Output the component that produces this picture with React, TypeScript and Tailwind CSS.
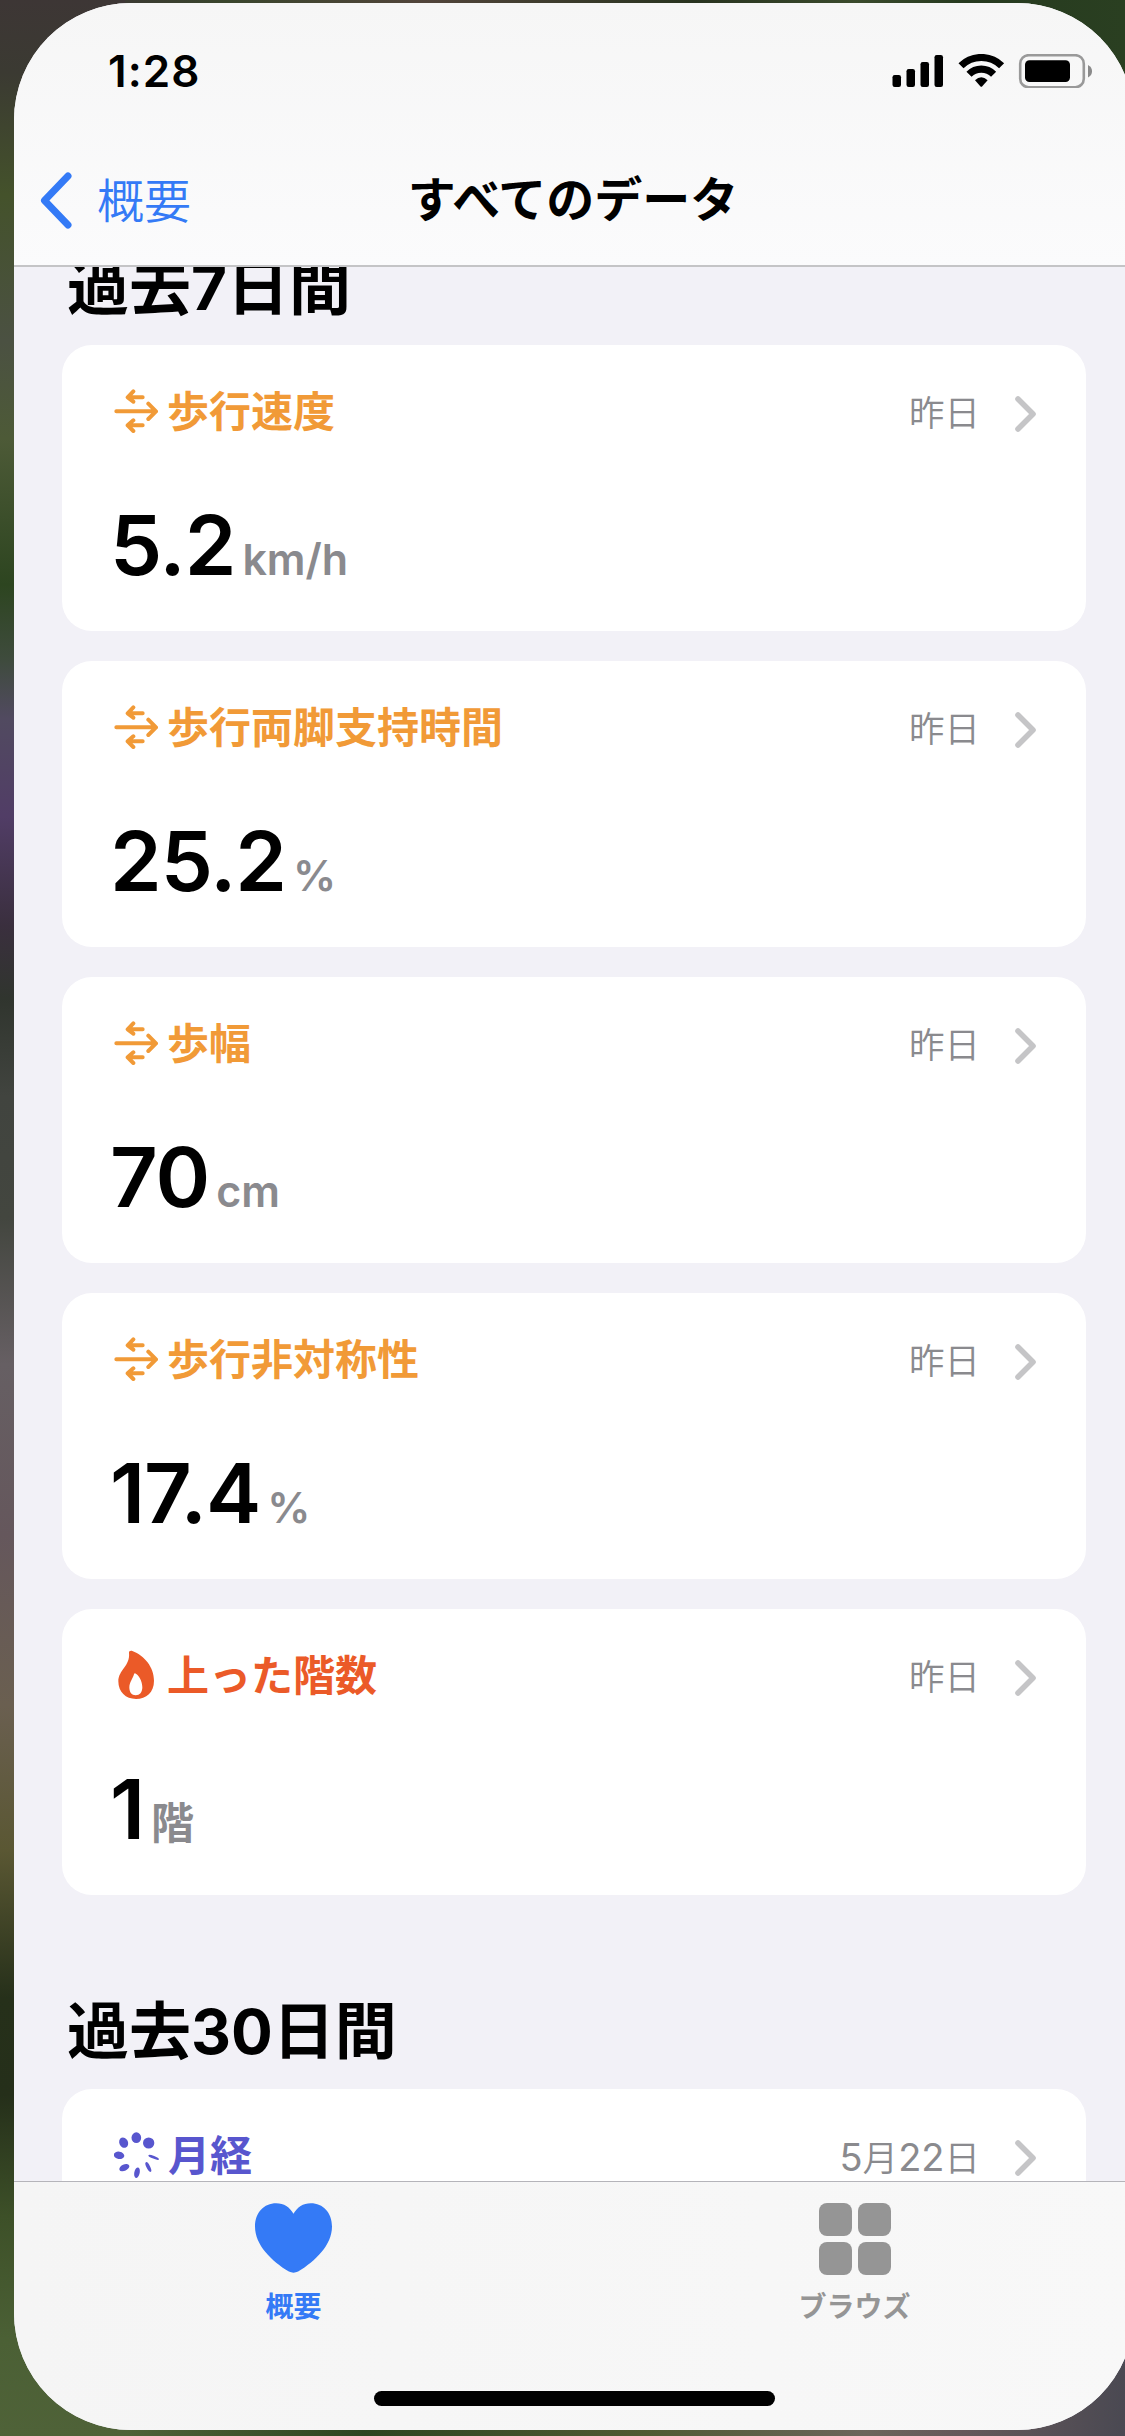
import type { ReactNode } from "react";
import clsx from "clsx";

type Metric = {
  title: string;
  value: string;
  unit: string;
  date: string;
  color: string;
  icon: ReactNode;
};

function WalkIcon() {
  return (
    <svg viewBox="0 0 132 132" className="size-11" fill="none" stroke="currentColor" strokeWidth={12} strokeLinecap="round" strokeLinejoin="round">
      <path d="M7 67H125M103 44L126 67L103 90" />
      <path d="M86 25H43M58 7L41 25L58 38" />
      <path d="M86 109H43M58 94L41 109L58 126" />
    </svg>
  );
}

function FlameIcon() {
  return (
    <svg viewBox="0 0 132 150" className="h-[50px] w-11" fill="currentColor" fillRule="evenodd">
      <path d="M45 9C44 3 50 1 55 3C92 17 120 52 120 92C120 127 97 147 66 147C35 147 13 126 13 94C13 60 49 48 45 9ZM63 70C73 74 85 92 85 112C85 127 77 136 65 136C53 136 46 127 46 112C46 98 57 84 60 73C61 70 62 70 63 70Z" />
    </svg>
  );
}

function CycleIcon() {
  return (
    <svg viewBox="0 0 135 138" className="h-[46px] w-[45px]" fill="currentColor">
      <ellipse cx="67" cy="17" rx="14.5" ry="16" />
      <ellipse cx="104" cy="33" rx="17" ry="16.5" />
      <ellipse cx="29" cy="32" rx="13" ry="16" transform="rotate(-25 29 32)" />
      <ellipse cx="15" cy="70" rx="16" ry="11" transform="rotate(10 15 70)" />
      <ellipse cx="31" cy="107" rx="16" ry="9.5" transform="rotate(-25 31 107)" />
      <ellipse cx="69" cy="122" rx="8" ry="16" transform="rotate(12 69 122)" />
      <ellipse cx="103" cy="105" rx="5.5" ry="16" transform="rotate(-27 103 105)" />
      <ellipse cx="119" cy="76" rx="17" ry="4" transform="rotate(22 119 76)" />
    </svg>
  );
}

function StatusIcons() {
  return (
    <svg viewBox="0 0 200 34" className="h-[34px] w-[200px]">
      <rect x="0.5" y="21" width="8.5" height="12" rx="2.2" />
      <rect x="14.5" y="15" width="8.5" height="18" rx="2.2" />
      <rect x="28.5" y="8" width="8.5" height="25" rx="2.2" />
      <rect x="42.5" y="1" width="8.5" height="32" rx="2.2" />
      <g fill="none" stroke="#000" strokeWidth="7.2">
        <path d="M69 11.8A29 29 0 0 1 109.6 11.8" />
        <path d="M77 20.2A17.4 17.4 0 0 1 101.6 20.2" />
      </g>
      <path d="M83 26.2Q89.3 20.4 95.6 26.2L90.3 32.2Q89.3 33.2 88.3 32.2Z" />
      <rect x="128.2" y="1.2" width="63.6" height="32" rx="8.5" fill="none" stroke="#999" strokeWidth="2.6" />
      <rect x="133" y="6.3" width="45" height="21.7" rx="4.5" />
      <path d="M196 11Q200 13 200 17.2Q200 21.4 196 23.4Z" fill="#8a8a8a" />
    </svg>
  );
}

function Chevron() {
  return (
    <svg viewBox="0 0 21 36" className="h-9 w-[21px]" fill="none" stroke="#c5c5c7" strokeWidth={5.6} strokeLinecap="round" strokeLinejoin="round">
      <path d="M3 3L18 18L3 33" />
    </svg>
  );
}

const week: Metric[] = [
  { title: "歩行速度", value: "5.2", unit: "km/h", date: "昨日", color: "text-[#f19a37]", icon: <WalkIcon /> },
  { title: "歩行両脚支持時間", value: "25.2", unit: "%", date: "昨日", color: "text-[#f19a37]", icon: <WalkIcon /> },
  { title: "歩幅", value: "70", unit: "cm", date: "昨日", color: "text-[#f19a37]", icon: <WalkIcon /> },
  { title: "歩行非対称性", value: "17.4", unit: "%", date: "昨日", color: "text-[#f19a37]", icon: <WalkIcon /> },
  { title: "上った階数", value: "1", unit: "階", date: "昨日", color: "text-[#eb5a28]", icon: <FlameIcon /> },
];

const month: Metric[] = [
  { title: "月経", value: "", unit: "", date: "5月22日", color: "text-[#5856ce]", icon: <CycleIcon /> },
];

// digits are set a little larger than the kanji next to them
function DateLabel({ date }: { date: string }) {
  return (
    <span className="text-[35.5px] leading-none font-[350] text-[#8a8a8e]">
      {date.split(/(\d+)/).map((part, i) =>
        /\d/.test(part) ? (
          <span key={i} className="text-[38px] leading-none font-normal">{part}</span>
        ) : (
          part
        )
      )}
    </span>
  );
}

function MetricCard({ metric }: { metric: Metric }) {
  return (
    <article className="h-[286px] shrink-0 rounded-[30px] bg-white pt-[42px] pr-[50px] pl-[52px]">
      <div className="flex h-12 items-center">
        <div className={clsx("flex items-center gap-[9px]", metric.color)}>
          {metric.icon}
          <h3 className="mt-0.5 text-[42px] leading-none font-bold">{metric.title}</h3>
        </div>
        <div className="mt-[5px] ml-auto flex items-center gap-[35px]">
          <DateLabel date={metric.date} />
          <Chevron />
        </div>
      </div>
      <div className="mt-[69px] -ml-1 flex items-baseline gap-[7px]">
        <span className="text-[83px] leading-none font-semibold tracking-[-0.012em]">{metric.value}</span>
        <span className="text-[43px] leading-none font-semibold text-[#8a8a8e]">{metric.unit}</span>
      </div>
    </article>
  );
}

function Section({ title, items }: { title: string; items: Metric[] }) {
  return (
    <section>
      <h2 className="ml-[5px] h-[62px] text-[62px] leading-[66px] font-bold">{title}</h2>
      <div className="mt-7 flex flex-col gap-[30px]">
        {items.map((m) => (
          <MetricCard key={m.title} metric={m} />
        ))}
      </div>
    </section>
  );
}

export default function App() {
  return (
    <div className="relative isolate h-[2436px] w-[1125px] overflow-hidden pt-[3px] pl-[14px] text-black [font-family:Inter,'Noto_Sans_CJK_JP',sans-serif]">
      {/* wallpaper that shows around the screen */}
      <div className="absolute inset-0 -z-10 bg-[linear-gradient(180deg,#3d3635_0%,#3b3a32_3%,#44522b_8%,#4b5142_14%,#4d5a37_18%,#2d4520_24%,#3e4b3c_27%,#514a60_29.5%,#513d66_33.5%,#3a2f3e_38%,#30352e_41%,#41443f_45%,#43463f_50%,#665f63_56%,#65575c_63%,#6a5f50_70%,#5a5733_76%,#26301a_82%,#252f1a_86%,#3d5028_91%,#4b6035_96%,#4f6238_100%)]" />
      <div className="absolute top-0 right-0 -z-10 h-40 w-[1000px] bg-[linear-gradient(90deg,#3b3a32_0%,#39452c_10%,#51443a_30%,#28331f_57%,#3a4a2c_73%,#263a1f_84%,#2a3f21_100%)]" />
      <div className="absolute right-0 bottom-0 -z-10 h-40 w-[1000px] bg-[linear-gradient(90deg,#4f6238_0%,#2d4520_24%,#4f5a32_52%,#6b655b_74%,#65575a_84%,#4a4952_100%)]" />

      <div className="flex h-[2427px] w-[1120px] flex-col overflow-hidden rounded-[117px] bg-[#f2f1f7]">
        <header className="relative z-10 h-[264px] shrink-0 border-b-2 border-[#c4c4c6] bg-linear-to-b from-[#f6f6f6] to-[#fbfbfc]">
          <div className="flex h-[136px] items-center justify-between pr-[42px] pl-[94px]">
            <span className="text-[44px] leading-none font-semibold tracking-[0.025em]">1:28</span>
            <StatusIcons />
          </div>
          <div className="grid h-[122px] grid-cols-[1fr_auto_1fr] items-center pr-0.5">
            <div className="flex items-center gap-[25px] pl-[26px] text-[#347af6]">
              <svg viewBox="0 0 32 57" className="h-[57px] w-8" fill="none" stroke="currentColor" strokeWidth={7} strokeLinecap="round" strokeLinejoin="round">
                <path d="M28 4L4.5 28.5L28 53" />
              </svg>
              <span className="text-[47px] leading-none font-[350]">概要</span>
            </div>
            <h1 className="text-[48px] leading-none font-bold">すべてのデータ</h1>
          </div>
        </header>

        <main className="flex min-h-0 flex-1 flex-col gap-[104px] overflow-hidden pr-12 pl-12">
          <div className="-mt-3">
            <Section title="過去7日間" items={week} />
          </div>
          <Section title="過去30日間" items={month} />
        </main>

        <footer className="relative z-10 flex h-[249px] shrink-0 flex-col border-t border-[#b5b4ba] bg-linear-to-r from-[#f5f5f5] to-[#f8f8f8]">
          <nav className="flex h-[209px] pt-[21px] text-[28px] leading-none font-bold">
            <div className="flex flex-1 flex-col items-center text-[#347af6]">
              <svg viewBox="0 0 232 210" className="h-[70px] w-[77px]" fill="currentColor">
                <path d="M116 32C127 12 145 0 168 0C205 0 232 28 232 70C232 126 182 174 130 206Q116 213 102 206C50 174 0 126 0 70C0 28 27 0 64 0C87 0 105 12 116 32Z" />
              </svg>
              <span className="mt-5">概要</span>
            </div>
            <div className="flex flex-1 flex-col items-center pl-0.5 text-[#959595]">
              <div className="grid grid-cols-2 gap-[6px]">
                <i className="size-[33px] rounded-[8px] bg-current" />
                <i className="size-[33px] rounded-[8px] bg-current" />
                <i className="size-[33px] rounded-[8px] bg-current" />
                <i className="size-[33px] rounded-[8px] bg-current" />
              </div>
              <span className="mt-[18px]">ブラウズ</span>
            </div>
          </nav>
          <div className="mx-auto h-[15px] w-[401px] rounded-full bg-black" />
        </footer>
      </div>
    </div>
  );
}
